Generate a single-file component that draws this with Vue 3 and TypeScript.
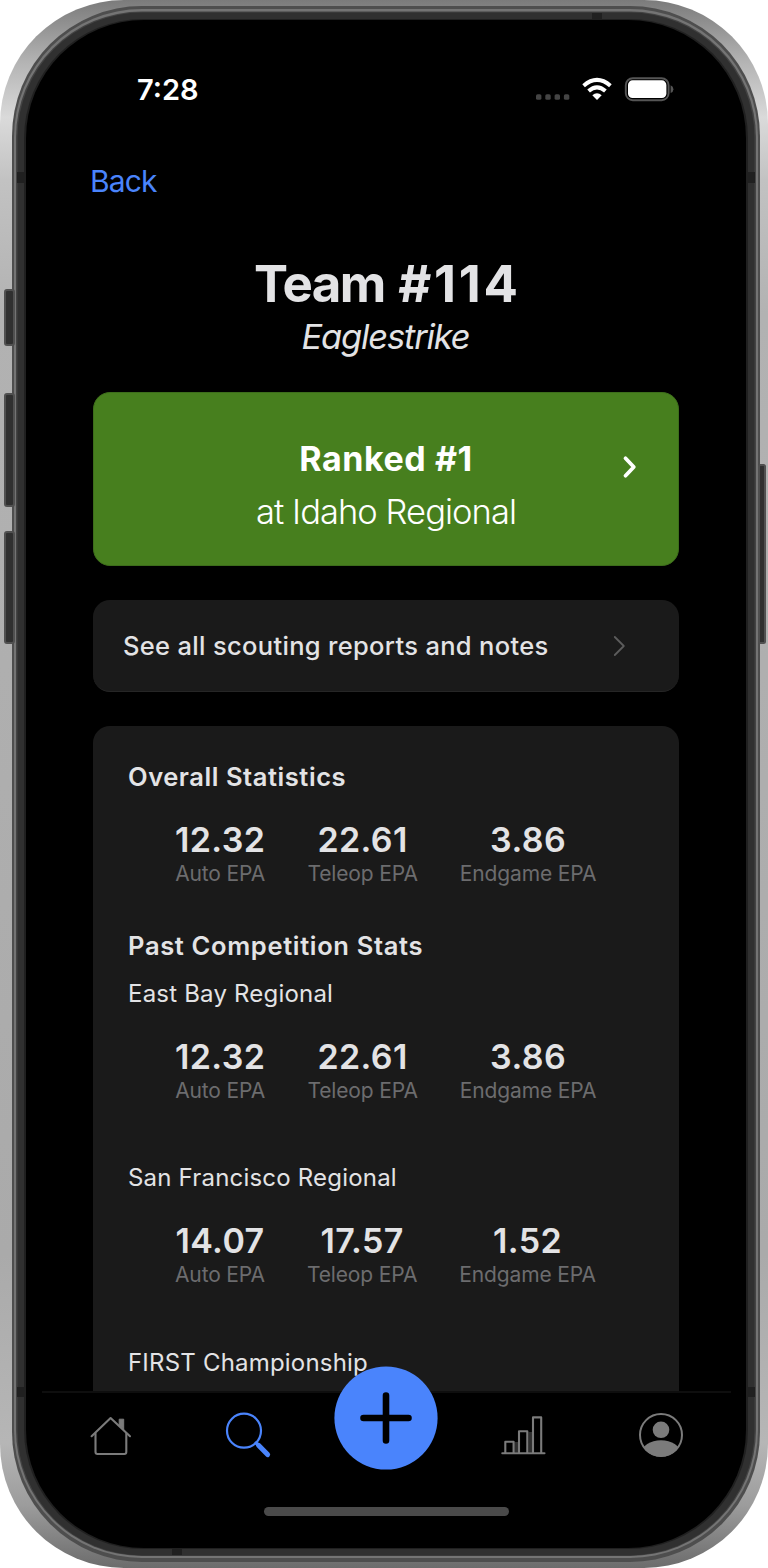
<script setup lang="ts">
interface Stat { value: string; label: string }
interface Competition { name: string; stats: Stat[] }

const makeStats = (auto: string, teleop: string, endgame: string): Stat[] => [
  { value: auto, label: 'Auto EPA' },
  { value: teleop, label: 'Teleop EPA' },
  { value: endgame, label: 'Endgame EPA' },
]

const overall = makeStats('12.32', '22.61', '3.86')
const competitions: Competition[] = [
  { name: 'East Bay Regional', stats: makeStats('12.32', '22.61', '3.86') },
  { name: 'San Francisco Regional', stats: makeStats('14.07', '17.57', '1.52') },
  { name: 'FIRST Championship', stats: [] },
]
</script>

<template>
  <div class="device">
    <svg class="frame" width="768" height="1568" viewBox="0 0 768 1568" aria-hidden="true">
      <defs>
        <linearGradient id="silver" x1="0" y1="0" x2="0" y2="1">
          <stop offset="0" stop-color="#7b7b7b" />
          <stop offset="0.012" stop-color="#8c8c8c" />
          <stop offset="0.04" stop-color="#b4b4b4" />
          <stop offset="0.075" stop-color="#dadada" />
          <stop offset="0.115" stop-color="#c2c2c2" />
          <stop offset="0.2" stop-color="#b2b2b2" />
          <stop offset="0.8" stop-color="#aaaaaa" />
          <stop offset="0.92" stop-color="#b6b6b6" />
          <stop offset="0.96" stop-color="#9c9c9c" />
          <stop offset="1" stop-color="#6c6c6c" />
        </linearGradient>
      </defs>
      <rect width="768" height="1568" rx="124" fill="url(#silver)" />
      <rect x="12" y="6" width="748" height="1556" rx="130" fill="#4e4e4e" />
      <rect x="14" y="9" width="744" height="1549" rx="128" fill="#747474" />
      <rect x="16" y="11.5" width="740" height="1544.5" rx="126" fill="#434343" />
      <rect x="17.5" y="12.5" width="737" height="1543" rx="125" fill="#303030" />
      <rect x="24" y="19" width="724" height="1530" rx="119" fill="#202020" />
      <rect x="26" y="20" width="720" height="1528" rx="118" fill="#000" />
      <g fill="#202020">
        <rect x="17" y="172" width="7" height="11" />
        <rect x="748" y="172" width="7" height="11" />
        <rect x="17" y="1387" width="7" height="10" />
        <rect x="748" y="1387" width="7" height="10" />
        <rect x="592" y="13" width="10" height="7" />
        <rect x="172" y="1548" width="10" height="7" />
      </g>
      <g fill="#303030" stroke="#505050" stroke-width="2">
        <rect x="5" y="290" width="9" height="55" rx="2" />
        <rect x="5" y="394" width="9" height="112" rx="2" />
        <rect x="5" y="532" width="9" height="111" rx="2" />
        <rect x="759" y="465" width="6" height="178" rx="1.5" />
      </g>
    </svg>

    <main class="screen">
      <header class="status">
        <span class="time">7:28</span>
        <svg width="142" height="28" viewBox="534 75 142 28" aria-hidden="true">
          <g fill="#444">
            <rect x="536" y="94.2" width="5.4" height="5.6" rx="1.6" />
            <rect x="545.3" y="94.2" width="5.4" height="5.6" rx="1.6" />
            <rect x="554.6" y="94.2" width="5.4" height="5.6" rx="1.6" />
            <rect x="563.9" y="94.2" width="5.4" height="5.6" rx="1.6" />
          </g>
          <g fill="none" stroke="#fff" stroke-width="4">
            <path d="M583.6 85.7Q597 74.2 610.4 85.7" />
            <path d="M588.6 91Q597 83.6 605.4 91" />
          </g>
          <path d="M592.3 95.2Q597 91.5 601.7 95.2L597 100Z" fill="#fff" />
          <rect x="625.8" y="78.2" width="42.8" height="22" rx="7" fill="none" stroke="#555" stroke-width="1.9" />
          <rect x="628" y="80.3" width="38.4" height="17.8" rx="4.6" fill="#fff" />
          <path d="M670.6 85.3Q673.4 86.5 673.4 89.2T670.6 93.1Z" fill="#555" />
        </svg>
      </header>

      <nav class="back"><a>Back</a></nav>

      <h1>Team <span class="number">#114</span></h1>
      <p class="nickname">Eaglestrike</p>

      <section class="rank">
        <div class="rank-copy">
          <strong>Ranked #1</strong>
          <span>at Idaho Regional</span>
        </div>
        <svg class="rank-arrow" width="18" height="26" viewBox="0 0 18 26" aria-hidden="true">
          <path d="M4.5 4.3L12.8 13L4.5 21.7" fill="none" stroke="#fff" stroke-width="3.8" stroke-linecap="round" stroke-linejoin="round" />
        </svg>
      </section>

      <section class="reports">
        <span>See all scouting reports and notes</span>
        <svg width="14" height="24" viewBox="0 0 14 24" aria-hidden="true">
          <path d="M1.8 3L10.8 12L1.8 21" fill="none" stroke="#5c5c5c" stroke-width="1.8" stroke-linecap="round" stroke-linejoin="round" />
        </svg>
      </section>

      <section class="stats-card">
        <h2>Overall Statistics</h2>
        <div class="stats overall">
          <div v-for="s in overall" :key="s.label" class="stat">
            <b>{{ s.value }}</b><small>{{ s.label }}</small>
          </div>
        </div>
        <h2 class="past">Past Competition Stats</h2>
        <article v-for="c in competitions" :key="c.name">
          <h3>{{ c.name }}</h3>
          <div class="stats">
            <div v-for="s in c.stats" :key="s.label" class="stat">
              <b>{{ s.value }}</b><small>{{ s.label }}</small>
            </div>
          </div>
        </article>
      </section>

      <footer class="tabs">
        <div class="tab">
          <svg width="48" height="48" viewBox="87 1411 48 48" fill="none" stroke="#7b7b7b" stroke-width="2.1" stroke-linejoin="round" stroke-linecap="round">
            <path d="M91.6 1436.2L110.6 1418L130 1436.2" />
            <path d="M95.5 1433.5V1452Q95.5 1454 97.5 1454H124.3Q126.3 1454 126.3 1452V1433.5" />
            <path d="M119.2 1425.2V1419.2H123.7V1429.3Z" fill="#7b7b7b" stroke-width="1" />
          </svg>
        </div>
        <div class="tab">
          <svg width="48" height="48" viewBox="224 1411 48 48" fill="none" stroke="#4a84fc" stroke-linecap="round">
            <circle cx="244" cy="1430.7" r="17" stroke-width="2.2" />
            <path d="M256.2 1443L258.5 1445.3" stroke-width="3.4" />
            <path d="M258.5 1445.3L267.6 1454.6" stroke-width="5" />
          </svg>
        </div>
        <div class="tab">
          <svg class="fab" width="104" height="104" viewBox="0 0 104 104">
            <circle cx="52" cy="52" r="51.6" fill="#4a84fc" />
            <path d="M52 29.5V74.5M29.5 52H74.5" stroke="#000" stroke-width="6.6" stroke-linecap="round" />
          </svg>
        </div>
        <div class="tab">
          <svg width="48" height="48" viewBox="499 1411 48 48" fill="none" stroke="#7b7b7b" stroke-width="2.1" stroke-linejoin="round" stroke-linecap="round">
            <path d="M514.5 1442V1452H518.5V1442ZM528.5 1432V1452H532.3V1432Z" fill="#2e2e2e" stroke="none" />
            <path d="M502.3 1453.2H544.5" />
            <path d="M505.3 1453V1441.7H513.6V1453M519 1453V1431.2H527.3V1453M533 1453V1417.4H541.2V1453" />
          </svg>
        </div>
        <div class="tab">
          <svg width="48" height="48" viewBox="636.7 1411 48 48">
            <defs><clipPath id="avatar"><circle cx="660.7" cy="1435" r="21.8" /></clipPath></defs>
            <circle cx="660.7" cy="1435" r="21" fill="none" stroke="#7b7b7b" stroke-width="2" />
            <g fill="#7b7b7b">
              <circle cx="660.7" cy="1429.8" r="8.3" />
              <ellipse cx="660.7" cy="1453.3" rx="19.5" ry="13" clip-path="url(#avatar)" />
            </g>
          </svg>
        </div>
      </footer>
      <div class="home-row"><div class="home-indicator"></div></div>
    </main>
  </div>
</template>

<style>
body { margin: 0; background: #fff; }
</style>

<style scoped>
.device {
  position: relative;
  width: 768px;
  height: 1568px;
  overflow: hidden;
  font-family: Inter, "Liberation Sans", sans-serif;
  color: #e3e3e5;
}
.frame { position: absolute; inset: 0; display: block; }
.screen {
  position: relative;
  box-sizing: border-box;
  width: 689px;
  height: 1568px;
  margin-left: 42px;
  padding-top: 69px;
  display: flex;
  flex-direction: column;
}
svg { display: block; flex: none; }
h1, h2, h3, p { margin: 0; }
h1, h2, h3, p, span, a, b, small, strong { white-space: nowrap; }

.status {
  height: 40px;
  flex: none;
  padding: 0 55px 0 95px;
  display: flex;
  align-items: center;
  justify-content: space-between;
}
.time { padding-top: 1.5px; font-size: 29px; font-weight: 600; color: #fff; line-height: 40px; }
.back { height: 40px; flex: none; margin: 52px 0 0 48px; font-size: 30px; line-height: 40px; letter-spacing: -0.9px; color: #4a84fc; }
h1 {
  margin-top: 53px;
  height: 60px;
  line-height: 60px;
  font-size: 51px;
  font-weight: 700;
  letter-spacing: -1.6px;
  text-align: center;
}
.number { margin: 0 -1.7px 0 3px; letter-spacing: 2.7px; }
.nickname { margin-top: 3px; height: 40px; line-height: 40px; font-size: 34.5px; font-style: italic; letter-spacing: -1.15px; text-align: center; padding-right: 2px; }

.rank {
  flex: none;
  box-sizing: border-box;
  margin: 35px 52px 0 51px;
  height: 174px;
  border: 1px solid #3d6d1b;
  border-radius: 17px;
  background: #477f1e;
  color: #fff;
  display: grid;
  grid-template-columns: 80px 1fr 80px;
  align-items: center;
}
.rank-copy { grid-column: 2; display: flex; flex-direction: column; align-items: center; padding-top: 12px; }
.rank-copy strong { font-size: 34px; line-height: 53px; font-weight: 700; letter-spacing: 0.55px; }
.rank-copy span { font-size: 34.5px; line-height: 53px; font-weight: 350; letter-spacing: -0.95px; }
.rank-arrow { margin: -24px 0 0 22.5px; }

.reports {
  flex: none;
  box-sizing: border-box;
  height: 92px;
  margin: 34px 52px 0 51px;
  padding: 0 52px 0 30px;
  border-radius: 17px;
  border-bottom: 1.5px solid #262626;
  background: #1a1a1a;
  display: flex;
  align-items: center;
  justify-content: space-between;
  font-size: 25.5px;
  font-weight: 500;
  letter-spacing: 0.32px;
}

.stats-card {
  flex: none;
  box-sizing: border-box;
  margin: 34px 52px 0 51px;
  height: 665px;
  padding: 31px 0 0 35px;
  border-radius: 17px 17px 0 0;
  background: #1a1a1a;
  overflow: hidden;
}
h2 { height: 40px; line-height: 40px; font-size: 25.5px; font-weight: 600; letter-spacing: 0.56px; }
h2.past { letter-spacing: 0.66px; }
h3 { height: 40px; line-height: 40px; font-size: 24px; font-weight: 400; margin-top: 8px; letter-spacing: 0.2px; }
.stats { display: flex; gap: 42px; padding-left: 47px; height: 136.5px; box-sizing: border-box; padding-top: 22.9px; }
.overall { height: 128.7px; padding-top: 23px; }
.stat { display: flex; flex-direction: column; align-items: center; }
.stat b { font-size: 34px; line-height: 40px; font-weight: 600; letter-spacing: 0.4px; }
.stat small { font-size: 21px; line-height: 28px; letter-spacing: -0.14px; color: #6c6c6e; }

.tabs {
  flex: none;
  box-sizing: border-box;
  height: 116px;
  border-top: 2px solid #0e0e0e;
  padding-right: 1.5px;
  display: grid;
  grid-template-columns: repeat(5, 1fr);
  justify-items: center;
}
.tab { padding-top: 18px; width: 48px; display: flex; justify-content: center; }
.fab { margin-top: -45px; }
.home-row { display: flex; justify-content: center; }
.home-indicator { width: 245px; height: 9px; border-radius: 5px; background: #4a4a4a; }
</style>
